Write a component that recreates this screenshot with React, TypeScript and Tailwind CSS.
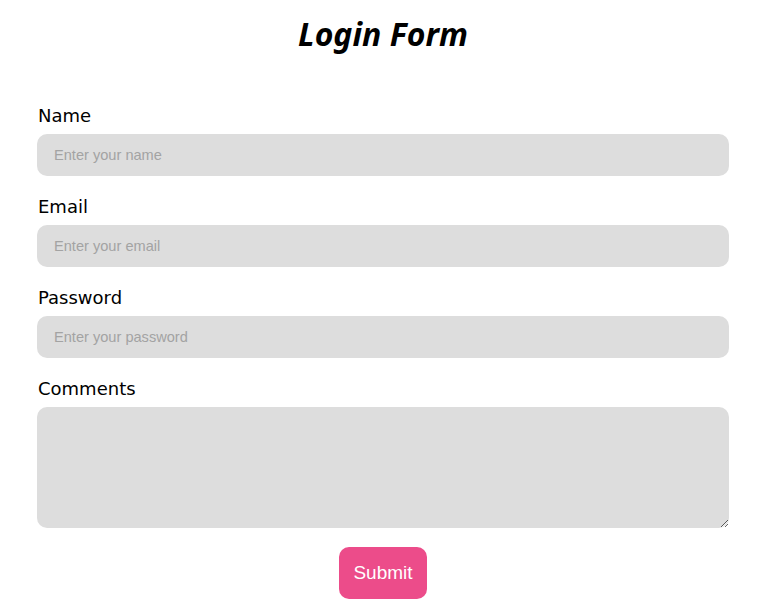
import React from "react";

export default function App() {
  const fields = [
    { label: "Name", ph: "Enter your name", type: "text" },
    { label: "Email", ph: "Enter your email", type: "email" },
    { label: "Password", ph: "Enter your password", type: "password" },
  ];
  return (
    <div className="w-[766px] h-[611px] bg-white px-[37px] pt-[13px]">
      <h1 className="text-center text-[32px] leading-[42px] font-bold italic text-black [font-family:'Noto_Sans',sans-serif]">
        Login Form
      </h1>
      <form className="mt-[48px] flex flex-col gap-[18px]" onSubmit={(e) => e.preventDefault()}>
        {fields.map((f) => (
          <div key={f.label} className="flex flex-col">
            <label className="text-[18px] leading-[24px] pt-px mb-[6px] pl-px text-black [font-family:'DejaVu_Sans',sans-serif]">
              {f.label}
            </label>
            <input
              type={f.type}
              placeholder={f.ph}
              className="h-[42px] rounded-[10px] bg-[#dddddd] pl-[17px] pr-4 pb-px text-[14.6px] outline-none placeholder:text-[#a3a3a3] [font-family:'Liberation_Sans',Arial,sans-serif]"
            />
          </div>
        ))}
        <div className="flex flex-col">
          <label className="text-[18px] leading-[24px] pt-px mb-[6px] pl-px text-black [font-family:'DejaVu_Sans',sans-serif]">
            Comments
          </label>
          <textarea className="h-[121px] rounded-[10px] bg-[#dddddd] px-4 py-2 outline-none [font-family:'Liberation_Sans',Arial,sans-serif]" />
        </div>
        <div className="flex justify-center mt-px">
          <button
            type="submit"
            className="w-[88px] h-[52px] rounded-[10px] bg-[#ec4c8a] text-white text-[19px] [font-family:'Liberation_Sans',Arial,sans-serif]"
          >
            Submit
          </button>
        </div>
      </form>
    </div>
  );
}
